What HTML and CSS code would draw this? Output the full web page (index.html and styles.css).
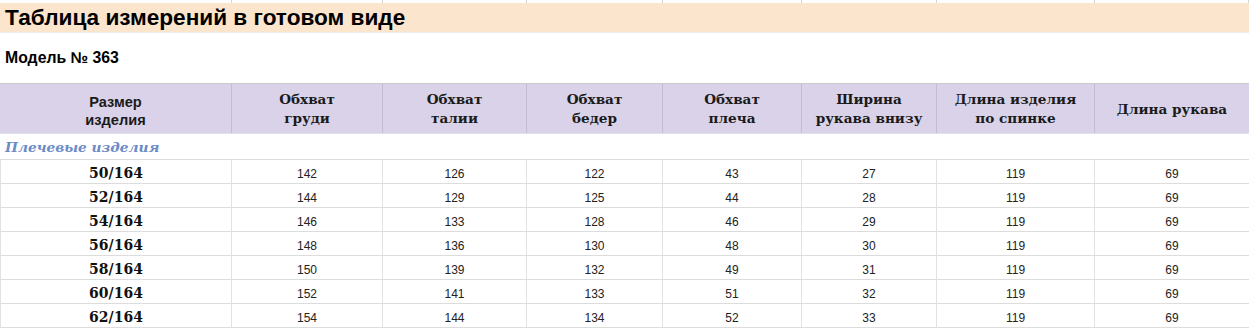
FILE: index.html
```
<!DOCTYPE html>
<html lang="ru">
<head>
<meta charset="utf-8">
<link rel="stylesheet" href="styles.css">
</head>
<body>
<div class="sheet">
  <div class="strip"><span></span><span></span><span></span><span></span><span></span><span></span><span></span><span></span></div>
  <div class="title">Таблица измерений в готовом виде</div>
  <div class="model">Модель № 363</div>
  <div class="head">
    <div class="hc sans">Размер<br>изделия</div>
    <div class="hc">Обхват<br>груди</div>
    <div class="hc">Обхват<br>талии</div>
    <div class="hc">Обхват<br>бедер</div>
    <div class="hc">Обхват<br>плеча</div>
    <div class="hc">Ширина<br>рукава внизу</div>
    <div class="hc">Длина изделия<br>по спинке</div>
    <div class="hc">Длина рукава</div>
  </div>
  <div class="section">Плечевые изделия</div>
  <div class="rows">
    <div class="sz">50/164</div><div class="n">142</div><div class="n">126</div><div class="n">122</div><div class="n">43</div><div class="n">27</div><div class="n">119</div><div class="n">69</div>
    <div class="sz">52/164</div><div class="n">144</div><div class="n">129</div><div class="n">125</div><div class="n">44</div><div class="n">28</div><div class="n">119</div><div class="n">69</div>
    <div class="sz">54/164</div><div class="n">146</div><div class="n">133</div><div class="n">128</div><div class="n">46</div><div class="n">29</div><div class="n">119</div><div class="n">69</div>
    <div class="sz">56/164</div><div class="n">148</div><div class="n">136</div><div class="n">130</div><div class="n">48</div><div class="n">30</div><div class="n">119</div><div class="n">69</div>
    <div class="sz">58/164</div><div class="n">150</div><div class="n">139</div><div class="n">132</div><div class="n">49</div><div class="n">31</div><div class="n">119</div><div class="n">69</div>
    <div class="sz">60/164</div><div class="n">152</div><div class="n">141</div><div class="n">133</div><div class="n">51</div><div class="n">32</div><div class="n">119</div><div class="n">69</div>
    <div class="sz">62/164</div><div class="n">154</div><div class="n">144</div><div class="n">134</div><div class="n">52</div><div class="n">33</div><div class="n">119</div><div class="n">69</div>
  </div>
</div>
</body>
</html>
```
FILE: styles.css
```
* { box-sizing: border-box; }
html, body { margin: 0; padding: 0; background: #fff; }
body { font-family: "Liberation Sans", Arial, sans-serif; color: #000; }
.sheet { width: 1249px; }
.strip, .head, .rows {
  display: grid;
  grid-template-columns: 232px 151px 144px 136px 139px 135px 158px 154px;
}
.strip { height: 3px; }
.strip span { border-right: 1px solid #d4d4d4; }
.title {
  height: 30px;
  background: #fce5cd;
  font-weight: bold;
  font-size: 22.6px;
  line-height: 30px;
  padding-left: 5px;
  border-bottom: 1px solid #ececec;
}
.model {
  height: 51px;
  display: flex;
  align-items: center;
  padding-left: 5px;
  font-weight: bold;
  font-size: 15.8px;
  border-bottom: 1px solid #c9c9c9;
}
.head { height: 50px; background: #d9d2e9; border-bottom: 1px solid #e4e0ec; }
.hc {
  display: flex;
  align-items: center;
  justify-content: center;
  text-align: center;
  font-family: "DejaVu Serif", "Liberation Serif", serif;
  font-weight: bold;
  font-size: 13.6px;
  line-height: 19px;
  color: #1a1a1a;
  border-right: 1px solid #c2bdcc;
  padding-top: 1px;
}
.hc.sans { font-family: "Liberation Sans", Arial, sans-serif; font-size: 14.6px; line-height: 18px; padding-top: 4px; }
.hc:last-child { border-right: none; }
.section {
  height: 26px;
  display: flex;
  align-items: center;
  padding-left: 5px;
  font-family: "DejaVu Serif", "Liberation Serif", serif;
  font-style: italic;
  font-weight: bold;
  font-size: 13.7px;
  color: #6a8bc6;
  border-bottom: 1px solid #dcdcdc;
}
.rows > div {
  height: 24px;
  display: flex;
  align-items: center;
  justify-content: center;
  border-right: 1px solid #e2e2e2;
  border-bottom: 1px solid #dcdcdc;
}
.rows > div:nth-child(8n) { border-right: none; }
.rows > div:nth-child(8n+1) { border-left: 1px solid #e2e2e2; }
.sz {
  font-family: "DejaVu Serif", "Liberation Serif", serif;
  font-weight: bold;
  font-size: 14px;
  color: #111;
  padding-top: 2px;
}
.n { font-size: 12px; color: #222; padding-top: 5px; }
```
